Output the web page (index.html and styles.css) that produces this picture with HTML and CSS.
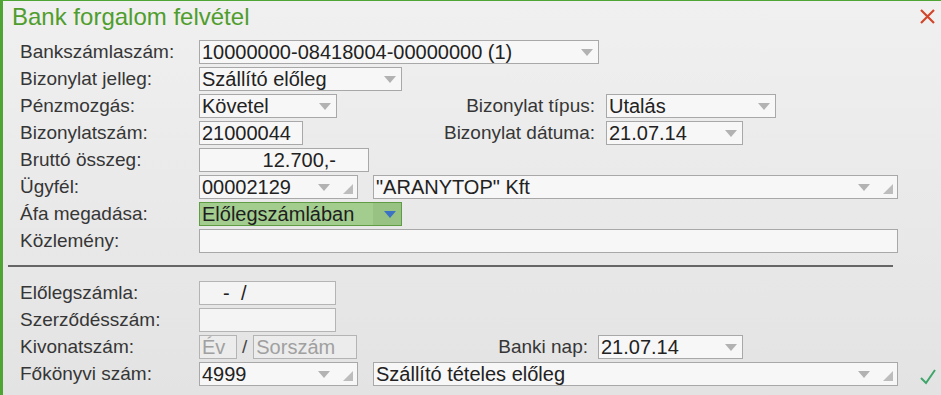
FILE: index.html
```html
<!DOCTYPE html>
<html lang="hu">
<head>
<meta charset="utf-8">
<title>Bank forgalom felvétel</title>
<link rel="stylesheet" href="styles.css">
</head>
<body>
<div class="dialog">
  <div class="titlebar">
    <div class="title">Bank forgalom felvétel</div>
    <svg class="close" width="17" height="17" viewBox="0 0 17 17"><path d="M2 2 L15 15 M15 2 L2 15" stroke="#d2452b" stroke-width="2.2" fill="none"/></svg>
  </div>

  <div class="form">
    <div class="row">
      <div class="lbl">Bankszámlaszám:</div>
      <div class="box w400 dd"><span class="val">10000000-08418004-00000000 (1)</span><i class="arr"></i></div>
    </div>
    <div class="row">
      <div class="lbl">Bizonylat jelleg:</div>
      <div class="box w203 dd"><span class="val">Szállító előleg</span><i class="arr"></i></div>
    </div>
    <div class="row">
      <div class="lbl">Pénzmozgás:</div>
      <div class="left l396">
        <div class="box w138 dd"><span class="val">Követel</span><i class="arr"></i></div>
        <div class="rlbl">Bizonylat típus:</div>
      </div>
      <div class="box w170 dd gap11"><span class="val">Utalás</span><i class="arr"></i></div>
    </div>
    <div class="row">
      <div class="lbl">Bizonylatszám:</div>
      <div class="left l396">
        <div class="box w104"><span class="val">21000044</span></div>
        <div class="rlbl">Bizonylat dátuma:</div>
      </div>
      <div class="box w137 dd gap11"><span class="val">21.07.14</span><i class="arr"></i></div>
    </div>
    <div class="row">
      <div class="lbl">Bruttó összeg:</div>
      <div class="box w170 num"><span class="val">12.700,-</span></div>
    </div>
    <div class="row">
      <div class="lbl">Ügyfél:</div>
      <div class="box w159 dd"><span class="val">00002129</span><i class="arr"></i><i class="corner"></i></div>
      <div class="box w525 dd gap15"><span class="val">"ARANYTOP" Kft</span><i class="arr"></i><i class="corner"></i></div>
    </div>
    <div class="row">
      <div class="lbl">Áfa megadása:</div>
      <div class="box w203 dd green"><span class="val">Előlegszámlában</span><i class="arr blue"></i></div>
    </div>
    <div class="row">
      <div class="lbl">Közlemény:</div>
      <div class="box w699"></div>
    </div>

    <div class="sep"></div>

    <div class="row">
      <div class="lbl">Előlegszámla:</div>
      <div class="box w137 faint"><span class="val pre">  -  /</span></div>
    </div>
    <div class="row">
      <div class="lbl">Szerződésszám:</div>
      <div class="box w137 faint"></div>
    </div>
    <div class="row">
      <div class="lbl">Kivonatszám:</div>
      <div class="left l389">
        <div class="kiv">
          <div class="box w38 faint ph"><span class="val">Év</span></div>
          <span class="slash">/</span>
          <div class="box w104 faint ph"><span class="val">Sorszám</span></div>
        </div>
        <div class="rlbl">Banki nap:</div>
      </div>
      <div class="box w145 dd gap10"><span class="val">21.07.14</span><i class="arr"></i></div>
    </div>
    <div class="row">
      <div class="lbl">Főkönyvi szám:</div>
      <div class="box w159 dd"><span class="val">4999</span><i class="arr"></i><i class="corner"></i></div>
      <div class="box w525 dd gap15"><span class="val">Szállító tételes előleg</span><i class="arr"></i><i class="corner"></i></div>
      <svg class="check" width="18" height="18" viewBox="0 0 18 18"><path d="M2 10 L7 15 L16 2" stroke="#3fa56a" stroke-width="2" fill="none"/></svg>
    </div>
  </div>
</div>
</body>
</html>
```

FILE: styles.css
```css
html, body {
  margin: 0;
  padding: 0;
}
body {
  width: 941px;
  height: 395px;
  overflow: hidden;
  font-family: "Liberation Sans", Arial, sans-serif;
  color: #333;
}
.dialog {
  box-sizing: border-box;
  width: 941px;
  height: 395px;
  border-left: 3px solid #4fa534;
  border-top: 1px solid #4fa534;
  background: linear-gradient(#f0f0f0, #e3e3e3);
}
.titlebar {
  display: flex;
  align-items: center;
  justify-content: space-between;
  height: 33px;
  padding: 0 5px 0 9px;
}
.title {
  font-size: 24px;
  color: #4f9d2d;
  line-height: 30px;
  padding-bottom: 2px;
}
.close {
  margin-top: -3px;
}
.form {
  padding: 6px 0 0 17px;
}
.row {
  display: flex;
  align-items: center;
  height: 24px;
  margin-bottom: 3px;
}
.lbl {
  width: 179px;
  flex: none;
  font-size: 19px;
  color: #363636;
  white-space: nowrap;
}
.left {
  display: flex;
  align-items: center;
  justify-content: space-between;
  flex: none;
}
.l396 { width: 396px; }
.l389 { width: 389px; }
.rlbl {
  font-size: 19px;
  color: #363636;
  white-space: nowrap;
}
.box {
  position: relative;
  box-sizing: border-box;
  height: 24px;
  flex: none;
  border: 1px solid #a8a8a8;
  background: #f7f7f7;
  font-size: 20px;
  color: #222;
  line-height: 22px;
  padding: 0 0 0 2px;
  white-space: nowrap;
  overflow: hidden;
}
.val { display: inline-block; }
.pre { white-space: pre; padding-left: 10px; }
.num { text-align: right; padding-right: 32px; }
.faint { background: #f4f4f4; border-color: #b4b4b4; }
.ph { color: #a0a0a0; background: #ececec; }
.kiv { display: flex; align-items: center; }
.slash { font-size: 19px; color: #444; margin: 0 6px 0 5px; }
.w38 { width: 38px; }
.w104 { width: 104px; }
.w137 { width: 137px; }
.w138 { width: 138px; }
.w145 { width: 145px; }
.w159 { width: 159px; }
.w170 { width: 170px; }
.w203 { width: 203px; }
.w400 { width: 400px; }
.w525 { width: 525px; }
.w699 { width: 699px; }
.gap10 { margin-left: 10px; }
.gap11 { margin-left: 11px; }
.gap15 { margin-left: 15px; }
.arr {
  position: absolute;
  right: 5px;
  top: 8px;
  width: 0;
  height: 0;
  border-left: 6.5px solid transparent;
  border-right: 6.5px solid transparent;
  border-top: 7px solid #b2b2b2;
}
.box .arr:has(+ .corner) {
  right: 27px;
}
.corner {
  position: absolute;
  right: 4px;
  bottom: 4px;
  width: 0;
  height: 0;
  border-left: 10px solid transparent;
  border-bottom: 10px solid #bdbdbd;
}
.green {
  background: linear-gradient(90deg, #a3cc8f 0 86%, #97c283 86% 100%);
  border-color: #5f9c43;
  color: #1e1e1e;
}
.arr.blue { border-top-color: #3b72c4; }
.sep {
  height: 2px;
  background: #666;
  margin: 12px 0 14px -12px;
  width: 885px;
}
.check {
  margin-left: 21px;
  margin-top: 6px;
}
```
